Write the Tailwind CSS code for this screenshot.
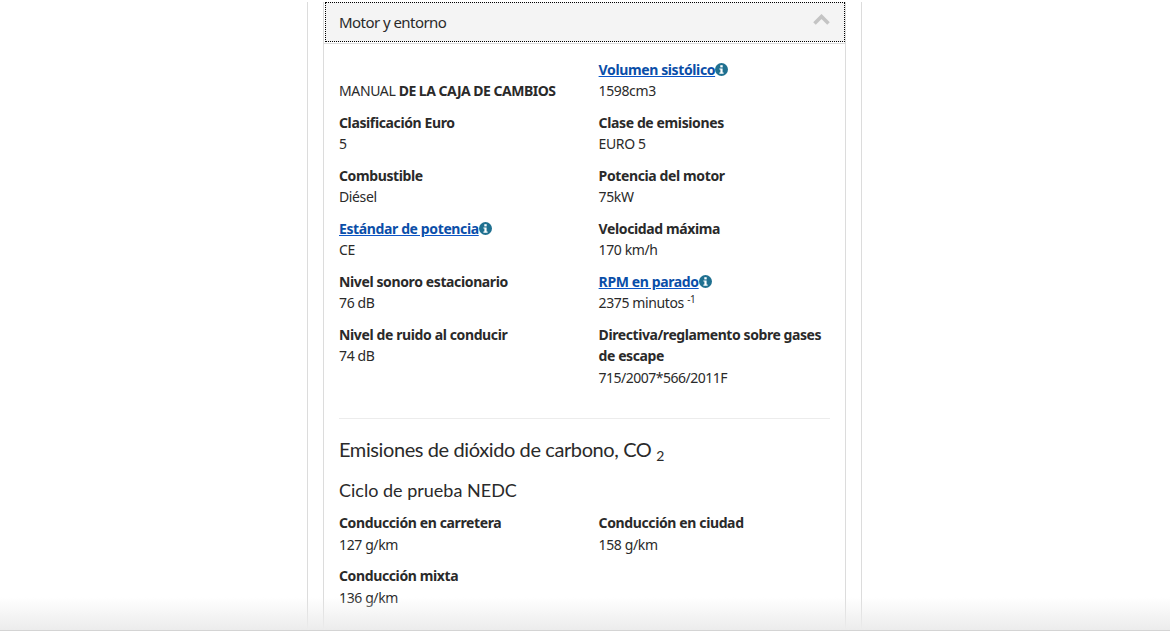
<!doctype html>
<html lang="es">
<head>
    <meta charset="UTF-8">
    <meta name="viewport" content="width=device-width, initial-scale=1.0">
    <script src="https://cdn.jsdelivr.net/npm/@tailwindcss/browser@4"></script>
    <title>Motor y entorno</title>
</head>
<body class="bg-white h-[631px] overflow-hidden font-['Noto_Sans',sans-serif] text-[14px] leading-[21.4px] tracking-[-0.38px] text-[#2a2a2a]">
<div class="relative h-[631px] overflow-hidden">
    <div class="ml-[307px] w-[555px] h-[631px] border-x border-[#dcdcdc] px-[15px]">
        <div class="h-[631px] border-x border-[#dcdcdc]">
            <div class="ml-px mt-[2px] h-[40px] pl-[14px] pr-[15px] flex items-center justify-between bg-[#f4f4f4] outline-1 outline-dotted outline-black -outline-offset-1 text-[15px] tracking-[-0.55px]">
                <span class="pt-[1px]">Motor y entorno</span>
                <svg class="w-[17px] h-[11px] mb-[6px]" viewBox="0 0 17 11"><path d="M1.5 9.5 8.5 2.5 15.5 9.5" fill="none" stroke="#c4c4c4" stroke-width="3.6"/></svg>
            </div>
            <div class="h-px bg-[#dcdcdc] mt-px"></div>
            <div class="px-[15px] pt-[15px]">
                <div class="grid grid-cols-[259.6px_231px] gap-y-[10.2px]">
                    <div class="flex items-end"><p>MANUAL <b class="tracking-[-0.5px]">DE LA CAJA DE CAMBIOS</b></p></div>
                    <div>
                        <p class="flex items-center"><a href="#" class="font-bold text-[#0a4ea8] underline decoration-[#0a55c8]">Volumen sistólico</a><svg class="w-[13px] h-[13px]" viewBox="0 0 13 13"><circle cx="6.5" cy="6.5" r="6.5" fill="#1f7090"/><rect x="5.3" y="2.2" width="2.4" height="2.2" fill="#fff"/><path d="M4.4 5.4H7.6V9.6H8.6V10.8H4.4V9.6H5.4V6.6H4.4Z" fill="#fff"/></svg></p>
                        <p>1598cm3</p>
                    </div>
                    <div><p class="font-bold">Clasificación Euro</p><p>5</p></div>
                    <div><p class="font-bold">Clase de emisiones</p><p>EURO 5</p></div>
                    <div><p class="font-bold">Combustible</p><p>Diésel</p></div>
                    <div><p class="font-bold">Potencia del motor</p><p>75kW</p></div>
                    <div>
                        <p class="flex items-center"><a href="#" class="font-bold text-[#0a4ea8] underline decoration-[#0a55c8]">Estándar de potencia</a><svg class="w-[13px] h-[13px]" viewBox="0 0 13 13"><circle cx="6.5" cy="6.5" r="6.5" fill="#1f7090"/><rect x="5.3" y="2.2" width="2.4" height="2.2" fill="#fff"/><path d="M4.4 5.4H7.6V9.6H8.6V10.8H4.4V9.6H5.4V6.6H4.4Z" fill="#fff"/></svg></p>
                        <p>CE</p>
                    </div>
                    <div><p class="font-bold">Velocidad máxima</p><p>170 km/h</p></div>
                    <div><p class="font-bold">Nivel sonoro estacionario</p><p>76 dB</p></div>
                    <div>
                        <p class="flex items-center"><a href="#" class="font-bold text-[#0a4ea8] underline decoration-[#0a55c8]">RPM en parado</a><svg class="w-[13px] h-[13px]" viewBox="0 0 13 13"><circle cx="6.5" cy="6.5" r="6.5" fill="#1f7090"/><rect x="5.3" y="2.2" width="2.4" height="2.2" fill="#fff"/><path d="M4.4 5.4H7.6V9.6H8.6V10.8H4.4V9.6H5.4V6.6H4.4Z" fill="#fff"/></svg></p>
                        <p>2375 minutos <sup class="text-[10px] leading-none">-1</sup></p>
                    </div>
                    <div><p class="font-bold">Nivel de ruido al conducir</p><p>74 dB</p></div>
                    <div><p class="font-bold tracking-[-0.42px]">Directiva/reglamento sobre gases<br>de escape</p><p class="tracking-[-0.5px]">715/2007*566/2011F</p></div>
                </div>
                <hr class="w-[491px] mt-[30px] border-[#ececec]">
                <h2 class="mt-[18px] font-['Lato',sans-serif] text-[20px] leading-[24px] tracking-[-0.4px]">Emisiones de dióxido de carbono, CO <sub class="text-[14px] leading-none">2</sub></h2>
                <h3 class="mt-[18px] font-['Lato',sans-serif] text-[18px] leading-[22px] tracking-normal">Ciclo de prueba NEDC</h3>
                <div class="grid grid-cols-[259.6px_231px] gap-y-[10.2px] mt-[11px]">
                    <div><p class="font-bold">Conducción en carretera</p><p>127 g/km</p></div>
                    <div><p class="font-bold">Conducción en ciudad</p><p>158 g/km</p></div>
                    <div><p class="font-bold">Conducción mixta</p><p>136 g/km</p></div>
                </div>
            </div>
        </div>
    </div>
    <div class="absolute left-0 right-0 bottom-0 h-[34px] bg-gradient-to-b from-white/0 to-[#ececec] border-b border-[#d4d4d4]"></div>
</div>
</body>
</html>
